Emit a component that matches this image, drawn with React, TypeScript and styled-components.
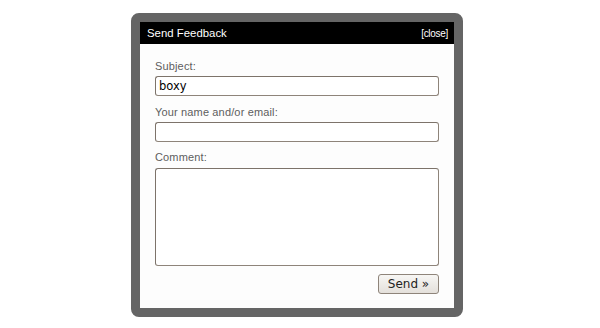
import React from 'react';
import styled, { createGlobalStyle } from 'styled-components';

const GlobalStyle = createGlobalStyle`
  html, body {
    margin: 0;
    padding: 0;
    background: #ffffff;
  }
`;

const Page = styled.div`
  width: 600px;
  height: 328px;
  padding: 13px 0 0 131px;
  box-sizing: border-box;
`;

const Dialog = styled.div`
  width: 332px;
  height: 304px;
  box-sizing: border-box;
  border: 9px solid #656565;
  border-radius: 8px;
  background: #fdfdfd;
  display: flex;
  flex-direction: column;
`;

const TitleBar = styled.div`
  height: 22px;
  background: #000;
  color: #fff;
  display: flex;
  align-items: center;
  justify-content: space-between;
  padding: 0 6px 0 7px;
  font-family: 'Liberation Sans', Arial, sans-serif;
`;

const Title = styled.span`
  font-size: 11.4px;
`;

const Close = styled.a`
  font-size: 10px;
  letter-spacing: -0.3px;
  color: #fff;
  cursor: pointer;
`;

const Form = styled.form`
  flex: 1;
  display: flex;
  flex-direction: column;
  padding: 15px 15px 0 15px;
`;

const Field = styled.div<{ $gap?: number }>`
  display: flex;
  flex-direction: column;
  margin-bottom: ${(p) => p.$gap ?? 9}px;
`;

const Label = styled.label<{ $space?: number }>`
  font-family: 'Liberation Sans', Arial, sans-serif;
  font-size: 11px;
  line-height: 14px;
  letter-spacing: 0.15px;
  color: #5e5e5e;
  margin-bottom: ${(p) => p.$space ?? 3}px;
`;

const TextInput = styled.input`
  width: 284px;
  height: 20px;
  box-sizing: border-box;
  border: 1px solid #8e847a;
  border-top-color: #7d736a;
  border-left-color: #7d736a;
  border-radius: 3px;
  padding: 0 3px;
  background: #fff;
  font-family: 'DejaVu Sans', sans-serif;
  font-size: 11.5px;
  color: #000;
  outline: none;
`;

const Comment = styled.textarea`
  width: 284px;
  height: 98px;
  box-sizing: border-box;
  border: 1px solid #8e847a;
  border-top-color: #7d736a;
  border-left-color: #7d736a;
  border-radius: 3px;
  background: #fff;
  resize: none;
  outline: none;
`;

const Actions = styled.div`
  display: flex;
  justify-content: flex-end;
`;

const SendButton = styled.button`
  width: 61px;
  height: 20px;
  box-sizing: border-box;
  border: 1px solid #8e847a;
  border-radius: 3px;
  background: linear-gradient(#f7f6f4, #e4e0db);
  font-family: 'DejaVu Sans', sans-serif;
  font-size: 12px;
  color: #222;
  padding: 0;
  display: flex;
  align-items: center;
  justify-content: center;
`;

export default function App() {
  return (
    <>
      <GlobalStyle />
      <Page>
        <Dialog>
          <TitleBar>
            <Title>Send Feedback</Title>
            <Close>[close]</Close>
          </TitleBar>
          <Form onSubmit={(e) => e.preventDefault()}>
            <Field>
              <Label>Subject:</Label>
              <TextInput defaultValue="boxy" />
            </Field>
            <Field $gap={8}>
              <Label>Your name and/or email:</Label>
              <TextInput />
            </Field>
            <Field $gap={8}>
              <Label $space={4}>Comment:</Label>
              <Comment />
            </Field>
            <Actions>
              <SendButton type="submit">Send »</SendButton>
            </Actions>
          </Form>
        </Dialog>
      </Page>
    </>
  );
}
